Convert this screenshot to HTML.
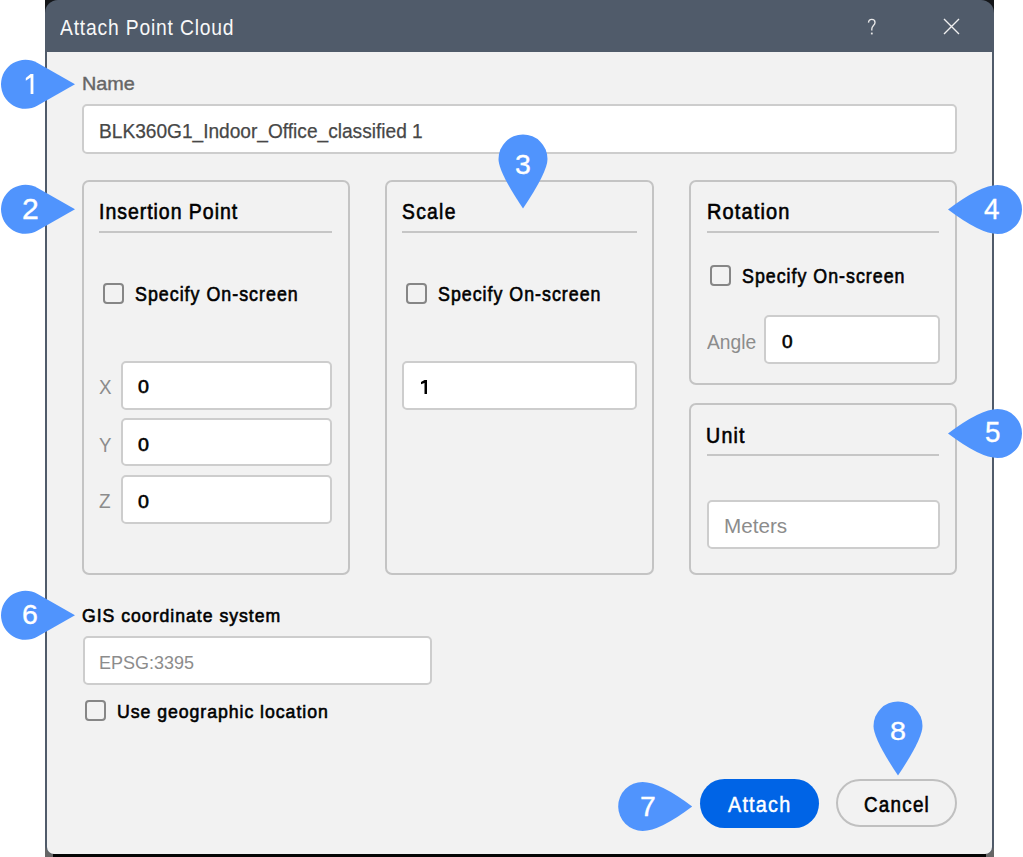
<!DOCTYPE html>
<html><head><meta charset="utf-8"><style>
html,body{margin:0;padding:0;width:1023px;height:857px;overflow:hidden;background:#fff;font-family:"Liberation Sans", sans-serif;}
</style></head><body>
<div style="position:absolute;left:45px;top:0px;width:949px;height:857px;box-sizing:border-box;background:#141619;"></div>
<div style="position:absolute;left:45px;top:853px;width:949px;height:4px;box-sizing:border-box;background:#050505;"></div>
<div style="position:absolute;left:45px;top:842px;width:8px;height:15px;box-sizing:border-box;background:#666;"></div>
<div style="position:absolute;left:986px;top:842px;width:8px;height:15px;box-sizing:border-box;background:#666;"></div>
<div style="position:absolute;left:45px;top:0px;width:949px;height:854px;box-sizing:border-box;background:#505b6a;border-radius:13px 13px 9px 9px;"></div>
<div style="position:absolute;left:47px;top:52px;width:945px;height:802px;box-sizing:border-box;background:#f2f2f2;border-radius:0 0 7px 7px;"></div>
<div style="position:absolute;left:59.75px;top:17.16px;font-size:22.25px;line-height:1;font-weight:400;color:#f8f8f8;white-space:nowrap;transform:scaleX(0.8668);transform-origin:0 0;letter-spacing:0.935px;">Attach Point Cloud</div>
<svg style="position:absolute;left:0;top:0;overflow:visible" width="1" height="1"><path d="M868.5,22.6 C868.6,20.2 870.1,19.3 871.8,19.3 C873.7,19.3 875,20.6 875,22.4 C875,25.4 871.8,25.6 871.8,29.0 L871.8,30.6" stroke="#e8e8e8" stroke-width="1.35" fill="none"/><rect x="870.9" y="32.6" width="1.8" height="1.8" fill="#e8e8e8"/></svg>
<svg style="position:absolute;left:943px;top:18px" width="17" height="17" viewBox="0 0 17 17"><path d="M1 1L16 16M16 1L1 16" stroke="#f0f0f0" stroke-width="1.4" fill="none"/></svg>
<div style="position:absolute;left:81.66px;top:75.39px;font-size:18.91px;line-height:1;font-weight:400;color:#666;white-space:nowrap;transform:scaleX(1.0483);transform-origin:0 0;-webkit-text-stroke:0.4px #666;">Name</div>
<div style="position:absolute;left:82px;top:104px;width:875px;height:50px;box-sizing:border-box;background:#fff;border:2px solid #cdcdcd;border-radius:5px;"></div>
<div style="position:absolute;left:99.02px;top:120.80px;font-size:20.07px;line-height:1;font-weight:400;color:#474747;white-space:nowrap;transform:scaleX(0.9527);transform-origin:0 0;-webkit-text-stroke:0.25px #474747;">BLK360G1_Indoor_Office_classified 1</div>
<div style="position:absolute;left:82px;top:180px;width:268px;height:395px;box-sizing:border-box;border:2px solid #c4c4c4;border-radius:7px;"></div>
<div style="position:absolute;left:385px;top:180px;width:269px;height:395px;box-sizing:border-box;border:2px solid #c4c4c4;border-radius:7px;"></div>
<div style="position:absolute;left:689px;top:180px;width:268px;height:205px;box-sizing:border-box;border:2px solid #c4c4c4;border-radius:7px;"></div>
<div style="position:absolute;left:689px;top:403px;width:268px;height:172px;box-sizing:border-box;border:2px solid #c4c4c4;border-radius:7px;"></div>
<div style="position:absolute;left:99px;top:231px;width:233px;height:2px;box-sizing:border-box;background:#c6c6c6;"></div>
<div style="position:absolute;left:402px;top:231px;width:235px;height:2px;box-sizing:border-box;background:#c6c6c6;"></div>
<div style="position:absolute;left:707px;top:231px;width:232px;height:2px;box-sizing:border-box;background:#c6c6c6;"></div>
<div style="position:absolute;left:707px;top:454px;width:232px;height:2px;box-sizing:border-box;background:#c6c6c6;"></div>
<div style="position:absolute;left:99.06px;top:201.86px;font-size:21.35px;line-height:1;font-weight:400;color:#000;white-space:nowrap;transform:scaleX(0.9128);transform-origin:0 0;letter-spacing:1.066px;-webkit-text-stroke:0.6px #000;">Insertion Point</div>
<div style="position:absolute;left:402.29px;top:201.76px;font-size:21.35px;line-height:1;font-weight:400;color:#000;white-space:nowrap;transform:scaleX(0.9029);transform-origin:0 0;letter-spacing:1.431px;-webkit-text-stroke:0.6px #000;">Scale</div>
<div style="position:absolute;left:706.51px;top:200.58px;font-size:21.21px;line-height:1;font-weight:400;color:#000;white-space:nowrap;transform:scaleX(0.9428);transform-origin:0 0;letter-spacing:1.204px;-webkit-text-stroke:0.6px #000;">Rotation</div>
<div style="position:absolute;left:706.44px;top:425.08px;font-size:21.21px;line-height:1;font-weight:400;color:#000;white-space:nowrap;transform:scaleX(0.9247);transform-origin:0 0;letter-spacing:1.329px;-webkit-text-stroke:0.6px #000;">Unit</div>
<div style="position:absolute;left:103px;top:283px;width:21px;height:21px;box-sizing:border-box;border:2px solid #868686;border-radius:4px;"></div>
<div style="position:absolute;left:406px;top:283px;width:21px;height:21px;box-sizing:border-box;border:2px solid #868686;border-radius:4px;"></div>
<div style="position:absolute;left:710px;top:265px;width:21px;height:21px;box-sizing:border-box;border:2px solid #868686;border-radius:4px;"></div>
<div style="position:absolute;left:85px;top:700px;width:21px;height:21px;box-sizing:border-box;border:2px solid #868686;border-radius:4px;"></div>
<div style="position:absolute;left:134.76px;top:285.04px;font-size:19.61px;line-height:1;font-weight:400;color:#000;white-space:nowrap;transform:scaleX(0.9091);transform-origin:0 0;letter-spacing:1.105px;-webkit-text-stroke:0.6px #000;">Specify On-screen</div>
<div style="position:absolute;left:437.86px;top:285.04px;font-size:19.61px;line-height:1;font-weight:400;color:#000;white-space:nowrap;transform:scaleX(0.9080);transform-origin:0 0;letter-spacing:1.105px;-webkit-text-stroke:0.6px #000;">Specify On-screen</div>
<div style="position:absolute;left:742.16px;top:267.24px;font-size:19.61px;line-height:1;font-weight:400;color:#000;white-space:nowrap;transform:scaleX(0.9080);transform-origin:0 0;letter-spacing:1.105px;-webkit-text-stroke:0.6px #000;">Specify On-screen</div>
<div style="position:absolute;left:121px;top:361px;width:211px;height:49px;box-sizing:border-box;background:#fff;border:2px solid #cdcdcd;border-radius:5px;"></div>
<div style="position:absolute;left:121px;top:418px;width:211px;height:48px;box-sizing:border-box;background:#fff;border:2px solid #cdcdcd;border-radius:5px;"></div>
<div style="position:absolute;left:121px;top:475px;width:211px;height:49px;box-sizing:border-box;background:#fff;border:2px solid #cdcdcd;border-radius:5px;"></div>
<div style="position:absolute;left:99.28px;top:376.80px;font-size:20.07px;line-height:1;font-weight:400;color:#8c8c8c;white-space:nowrap;transform:scaleX(0.9364);transform-origin:0 0;">X</div>
<div style="position:absolute;left:99.08px;top:434.82px;font-size:20.00px;line-height:1;font-weight:400;color:#8c8c8c;white-space:nowrap;transform:scaleX(0.9317);transform-origin:0 0;">Y</div>
<div style="position:absolute;left:99.38px;top:491.87px;font-size:19.64px;line-height:1;font-weight:400;color:#8c8c8c;white-space:nowrap;transform:scaleX(0.9674);transform-origin:0 0;">Z</div>
<div style="position:absolute;left:137.97px;top:377.56px;font-size:18.77px;line-height:1;font-weight:400;color:#000;white-space:nowrap;transform:scaleX(1.0465);transform-origin:0 0;-webkit-text-stroke:0.6px #000;">0</div>
<div style="position:absolute;left:137.97px;top:435.56px;font-size:18.77px;line-height:1;font-weight:400;color:#000;white-space:nowrap;transform:scaleX(1.0465);transform-origin:0 0;-webkit-text-stroke:0.6px #000;">0</div>
<div style="position:absolute;left:137.97px;top:492.32px;font-size:19.05px;line-height:1;font-weight:400;color:#000;white-space:nowrap;transform:scaleX(1.0310);transform-origin:0 0;-webkit-text-stroke:0.6px #000;">0</div>
<div style="position:absolute;left:402px;top:361px;width:235px;height:49px;box-sizing:border-box;background:#fff;border:2px solid #cdcdcd;border-radius:5px;"></div>
<svg style="position:absolute;left:0;top:0;overflow:visible" width="1" height="1"><path d="M424.5,380.1 H427.0 V393.9 H424.5 V382.9 L421,384.3 V382.0 Z" fill="#000"/></svg>
<div style="position:absolute;left:706.75px;top:332.23px;font-size:20.51px;line-height:1;font-weight:400;color:#8c8c8c;white-space:nowrap;transform:scaleX(0.9393);transform-origin:0 0;">Angle</div>
<div style="position:absolute;left:764px;top:315px;width:176px;height:49px;box-sizing:border-box;background:#fff;border:2px solid #cdcdcd;border-radius:5px;"></div>
<div style="position:absolute;left:782.20px;top:333.04px;font-size:18.91px;line-height:1;font-weight:400;color:#000;white-space:nowrap;transform:scaleX(1.0055);transform-origin:0 0;-webkit-text-stroke:0.6px #000;">0</div>
<div style="position:absolute;left:707px;top:500px;width:233px;height:49px;box-sizing:border-box;background:#fff;border:2px solid #cdcdcd;border-radius:5px;"></div>
<div style="position:absolute;left:723.70px;top:515.63px;font-size:20.51px;line-height:1;font-weight:400;color:#8c8c8c;white-space:nowrap;transform:scaleX(1.0075);transform-origin:0 0;">Meters</div>
<div style="position:absolute;left:82.18px;top:607.00px;font-size:18.59px;line-height:1;font-weight:400;color:#000;white-space:nowrap;transform:scaleX(0.9503);transform-origin:0 0;letter-spacing:1.033px;-webkit-text-stroke:0.6px #000;">GIS coordinate system</div>
<div style="position:absolute;left:83px;top:636px;width:349px;height:49px;box-sizing:border-box;background:#fff;border:2px solid #cdcdcd;border-radius:5px;"></div>
<div style="position:absolute;left:99.32px;top:653.84px;font-size:18.62px;line-height:1;font-weight:400;color:#8c8c8c;white-space:nowrap;transform:scaleX(0.9654);transform-origin:0 0;">EPSG:3395</div>
<div style="position:absolute;left:116.59px;top:701.93px;font-size:19.03px;line-height:1;font-weight:400;color:#000;white-space:nowrap;transform:scaleX(0.9310);transform-origin:0 0;letter-spacing:1.017px;-webkit-text-stroke:0.6px #000;">Use geographic location</div>
<div style="position:absolute;left:700px;top:778.6px;width:119px;height:49.0px;box-sizing:border-box;background:#0064e6;border-radius:25px;"></div>
<div style="position:absolute;left:728.42px;top:793.50px;font-size:21.18px;line-height:1;font-weight:400;color:#fff;white-space:nowrap;transform:scaleX(0.9337);transform-origin:0 0;letter-spacing:1.304px;-webkit-text-stroke:0.45px #fff;">Attach</div>
<div style="position:absolute;left:836px;top:779px;width:121px;height:48px;box-sizing:border-box;border:2px solid #c0c0c0;border-radius:24px;"></div>
<div style="position:absolute;left:864.22px;top:794.96px;font-size:21.35px;line-height:1;font-weight:400;color:#000;white-space:nowrap;transform:scaleX(0.8807);transform-origin:0 0;letter-spacing:1.421px;-webkit-text-stroke:0.6px #000;">Cancel</div>
<svg style="position:absolute;left:0;top:0;overflow:visible" width="1" height="1"><path d="M75.00,84.30 L37.63,63.01 A24.5,24.5 0 1 0 37.63,105.59 Z" fill="#5094fd"/></svg>
<svg style="position:absolute;left:0;top:0;overflow:visible" width="1" height="1"><path d="M30.60,73.90 H33.40 V94.10 H30.60 V77.40 L25.80,80.70 V78.00 Z" fill="#fff"/></svg>
<svg style="position:absolute;left:0;top:0;overflow:visible" width="1" height="1"><path d="M75.00,209.30 L37.63,188.01 A24.5,24.5 0 1 0 37.63,230.59 Z" fill="#5094fd"/></svg>
<div style="position:absolute;left:22.19px;top:194.58px;font-size:28.96px;line-height:1;font-weight:400;color:#fff;white-space:nowrap;transform:scaleX(1.0397);transform-origin:0 0;-webkit-text-stroke:0.35px #fff;">2</div>
<svg style="position:absolute;left:0;top:0;overflow:visible" width="1" height="1"><path d="M523.00,208.50 Q547.50,172.00 547.50,159.00 A24.5,24.5 0 0 0 498.50,159.00 Q498.50,172.00 523.00,208.50 Z" fill="#5094fd"/></svg>
<div style="position:absolute;left:515.13px;top:149.68px;font-size:28.27px;line-height:1;font-weight:400;color:#fff;white-space:nowrap;transform:scaleX(1.0054);transform-origin:0 0;-webkit-text-stroke:0.35px #fff;">3</div>
<svg style="position:absolute;left:0;top:0;overflow:visible" width="1" height="1"><path d="M948.00,209.50 Q980.50,234.00 997.50,234.00 A24.5,24.5 0 0 0 997.50,185.00 Q980.50,185.00 948.00,209.50 Z" fill="#5094fd"/></svg>
<div style="position:absolute;left:984.27px;top:194.22px;font-size:29.38px;line-height:1;font-weight:400;color:#fff;white-space:nowrap;transform:scaleX(0.9503);transform-origin:0 0;-webkit-text-stroke:0.35px #fff;">4</div>
<svg style="position:absolute;left:0;top:0;overflow:visible" width="1" height="1"><path d="M948.00,433.50 Q980.50,458.00 997.50,458.00 A24.5,24.5 0 0 0 997.50,409.00 Q980.50,409.00 948.00,433.50 Z" fill="#5094fd"/></svg>
<div style="position:absolute;left:985.09px;top:418.29px;font-size:28.96px;line-height:1;font-weight:400;color:#fff;white-space:nowrap;transform:scaleX(0.9596);transform-origin:0 0;-webkit-text-stroke:0.35px #fff;">5</div>
<svg style="position:absolute;left:0;top:0;overflow:visible" width="1" height="1"><path d="M75.00,615.30 L37.63,594.01 A24.5,24.5 0 1 0 37.63,636.59 Z" fill="#5094fd"/></svg>
<div style="position:absolute;left:22.27px;top:601.02px;font-size:27.99px;line-height:1;font-weight:400;color:#fff;white-space:nowrap;transform:scaleX(1.0198);transform-origin:0 0;-webkit-text-stroke:0.35px #fff;">6</div>
<svg style="position:absolute;left:0;top:0;overflow:visible" width="1" height="1"><path d="M692.20,806.40 Q659.70,781.90 642.70,781.90 A24.5,24.5 0 0 0 642.70,830.90 Q659.70,830.90 692.20,806.40 Z" fill="#5094fd"/></svg>
<div style="position:absolute;left:639.78px;top:791.71px;font-size:28.22px;line-height:1;font-weight:400;color:#fff;white-space:nowrap;transform:scaleX(1.0047);transform-origin:0 0;-webkit-text-stroke:0.35px #fff;">7</div>
<svg style="position:absolute;left:0;top:0;overflow:visible" width="1" height="1"><path d="M898.00,775.50 Q922.50,739.00 922.50,726.00 A24.5,24.5 0 0 0 873.50,726.00 Q873.50,739.00 898.00,775.50 Z" fill="#5094fd"/></svg>
<div style="position:absolute;left:889.98px;top:718.06px;font-size:26.43px;line-height:1;font-weight:400;color:#fff;white-space:nowrap;transform:scaleX(1.0867);transform-origin:0 0;-webkit-text-stroke:0.35px #fff;">8</div>
</body></html>
